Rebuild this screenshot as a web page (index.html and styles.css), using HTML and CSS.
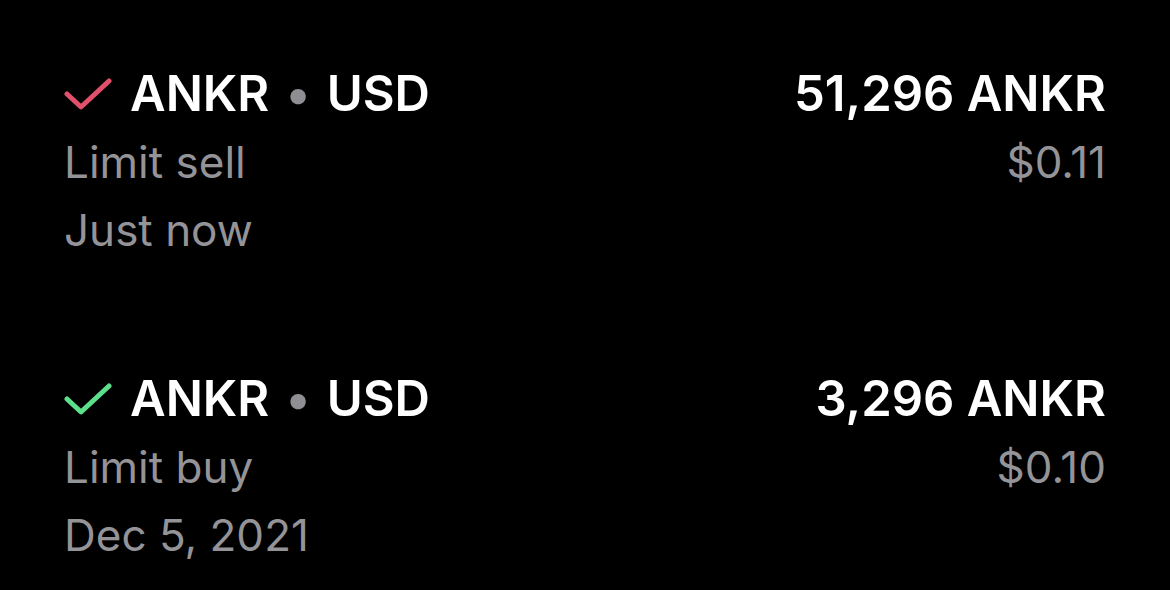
FILE: index.html
```html
<!DOCTYPE html>
<html lang="en">
<head>
    <meta charset="UTF-8">
    <meta name="viewport" content="width=device-width, initial-scale=1.0">
    <title>Orders</title>
    <link rel="stylesheet" href="styles.css">
</head>
<body>

    <div class="orders">
        <div class="order">
            <div class="order-left">
                <div class="pair">
                    <svg class="check sell" viewBox="0 0 48 32" width="48" height="32">
                        <path d="M3 16 L17 29 L45 3" />
                    </svg>
                    <span>ANKR <span class="dot">&bull;</span> USD</span>
                </div>
                <div class="sub">Limit sell</div>
                <div class="sub">Just now</div>
            </div>
            <div class="order-right">
                <div class="amount">51,296 ANKR</div>
                <div class="sub">$0.11</div>
            </div>
        </div>

        <div class="order">
            <div class="order-left">
                <div class="pair">
                    <svg class="check buy" viewBox="0 0 48 32" width="48" height="32">
                        <path d="M3 16 L17 29 L45 3" />
                    </svg>
                    <span>ANKR <span class="dot">&bull;</span> USD</span>
                </div>
                <div class="sub">Limit buy</div>
                <div class="sub">Dec 5, 2021</div>
            </div>
            <div class="order-right">
                <div class="amount">3,296 ANKR</div>
                <div class="sub">$0.10</div>
            </div>
        </div>
    </div>

</body>
</html>
```

FILE: styles.css
```css
body {
    font-family: Inter, "Noto Sans", sans-serif;
    background-color: #000;
    color: #fff;
    margin: 0;
    padding: 0;
}
.orders {
    padding: 60px 64px 0 64px;
    display: flex;
    flex-direction: column;
    gap: 101px;
}
.order {
    display: flex;
    justify-content: space-between;
}
.order-left, .order-right {
    display: flex;
    flex-direction: column;
}
.order-right {
    align-items: flex-end;
}
.pair, .amount {
    font-size: 49px;
    font-weight: 600;
    line-height: 68px;
}
.pair {
    display: flex;
    align-items: center;
    gap: 18px;
}
.dot {
    color: #8e8e93;
    margin: 0 4px;
}
.check path {
    fill: none;
    stroke-width: 5;
    stroke-linecap: round;
    stroke-linejoin: round;
}
.check.sell path {
    stroke: #e0506a;
}
.check.buy path {
    stroke: #5ce08c;
}
.sub {
    font-size: 44px;
    line-height: 68px;
    color: #939398;
}
```
